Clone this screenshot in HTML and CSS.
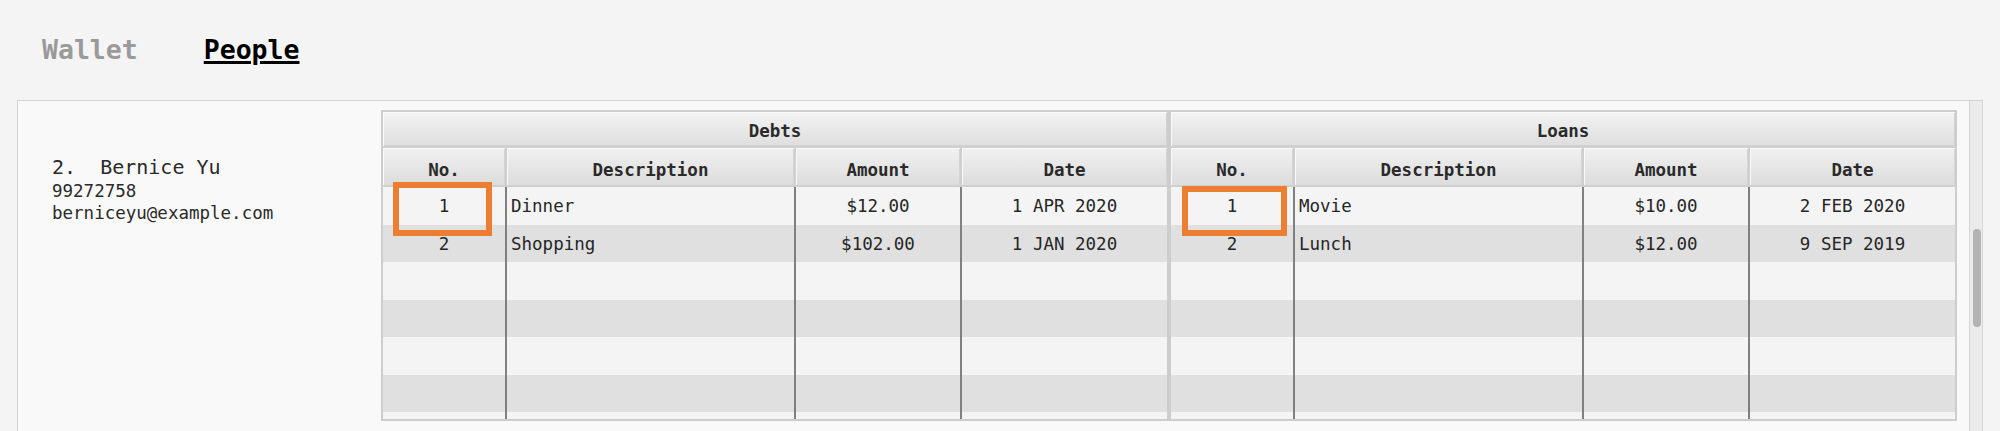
FILE: index.html
```html
<!DOCTYPE html>
<html>
<head>
<meta charset="utf-8">
<link rel="stylesheet" href="styles.css">
</head>
<body>
<nav class="tabs">
  <span class="tab">Wallet</span>
  <span class="tab active">People</span>
</nav>
<section class="panel">
  <div class="content">
    <div class="person">
      <div class="name">2.&nbsp;&nbsp;Bernice Yu</div>
      <div class="detail">99272758</div>
      <div class="detail">berniceyu@example.com</div>
    </div>
    <div class="tables">
      <div class="table">
        <div class="group-head">Debts</div>
        <div class="cols col-head">
          <div class="hcell">No.</div>
          <div class="hcell">Description</div>
          <div class="hcell">Amount</div>
          <div class="hcell">Date</div>
        </div>
        <div class="body">
          <div class="cols row"><div class="cell c">1</div><div class="cell">Dinner</div><div class="cell c">$12.00</div><div class="cell c">1 APR 2020</div></div>
          <div class="cols row alt"><div class="cell c">2</div><div class="cell">Shopping</div><div class="cell c">$102.00</div><div class="cell c">1 JAN 2020</div></div>
          <div class="cols row"><div class="cell"></div><div class="cell"></div><div class="cell"></div><div class="cell"></div></div>
          <div class="cols row alt"><div class="cell"></div><div class="cell"></div><div class="cell"></div><div class="cell"></div></div>
          <div class="cols row"><div class="cell"></div><div class="cell"></div><div class="cell"></div><div class="cell"></div></div>
          <div class="cols row alt"><div class="cell"></div><div class="cell"></div><div class="cell"></div><div class="cell"></div></div>
          <div class="cols row"><div class="cell"></div><div class="cell"></div><div class="cell"></div><div class="cell"></div></div>
        </div>
        <div class="mark mark-debts"></div>
      </div>
      <div class="table">
        <div class="group-head">Loans</div>
        <div class="cols col-head">
          <div class="hcell">No.</div>
          <div class="hcell">Description</div>
          <div class="hcell">Amount</div>
          <div class="hcell">Date</div>
        </div>
        <div class="body">
          <div class="cols row"><div class="cell c">1</div><div class="cell">Movie</div><div class="cell c">$10.00</div><div class="cell c">2 FEB 2020</div></div>
          <div class="cols row alt"><div class="cell c">2</div><div class="cell">Lunch</div><div class="cell c">$12.00</div><div class="cell c">9 SEP 2019</div></div>
          <div class="cols row"><div class="cell"></div><div class="cell"></div><div class="cell"></div><div class="cell"></div></div>
          <div class="cols row alt"><div class="cell"></div><div class="cell"></div><div class="cell"></div><div class="cell"></div></div>
          <div class="cols row"><div class="cell"></div><div class="cell"></div><div class="cell"></div><div class="cell"></div></div>
          <div class="cols row alt"><div class="cell"></div><div class="cell"></div><div class="cell"></div><div class="cell"></div></div>
          <div class="cols row"><div class="cell"></div><div class="cell"></div><div class="cell"></div><div class="cell"></div></div>
        </div>
        <div class="mark mark-loans"></div>
      </div>
    </div>
  </div>
  <div class="scrollbar"><div class="thumb"></div></div>
</section>
</body>
</html>
```
FILE: styles.css
```css
html, body {
  margin: 0;
  padding: 0;
}
body {
  background: #f4f4f4;
  font-family: "DejaVu Sans Mono", "Liberation Mono", monospace;
  color: #2a2a2a;
  height: 431px;
  overflow: hidden;
}
.tabs {
  display: flex;
  gap: 66px;
  height: 100px;
  box-sizing: border-box;
  padding: 34px 0 0 42px;
}
.tab {
  font-size: 26.5px;
  line-height: 31px;
  font-weight: bold;
  color: #9a9a9a;
}
.tab.active {
  color: #000000;
  text-decoration: underline;
  text-decoration-thickness: 3px;
  text-underline-offset: 2px;
}
.panel {
  margin-left: 17px;
  width: 1966px;
  height: 360px;
  box-sizing: border-box;
  border-top: 1px solid #d3d3d3;
  border-left: 1px solid #d3d3d3;
  background: #f9f9f9;
  display: flex;
}
.content {
  flex: 1;
  display: flex;
  padding: 9px 12px 0 0;
}
.person {
  width: 363px;
  flex: none;
  box-sizing: border-box;
  padding: 45px 0 0 34px;
  color: #2a2a2a;
}
.name {
  font-size: 20px;
  line-height: 25px;
}
.detail {
  font-size: 17.5px;
  line-height: 22px;
}
.tables {
  flex: 1;
  display: flex;
  align-items: flex-start;
}
.table {
  flex: 1;
  position: relative;
  border: 2px solid #cdcdcd;
  background: #f4f4f4;
}
.group-head {
  height: 36px;
  box-sizing: border-box;
  padding-top: 3px;
  line-height: 33px;
  text-align: center;
  font-weight: bold;
  font-size: 17.5px;
  color: #2a2a2a;
  background: linear-gradient(#f3f3f3, #dedede);
  box-shadow: inset 1px 1px 0 #fbfbfb, inset -1px -1px 0 #d2d2d2;
  border-bottom: 2px solid #cfcfcf;
}
.cols {
  display: grid;
  grid-template-columns: 124px 289px 166px 1fr;
}
.col-head {
  height: 37px;
  border-bottom: 2px solid #cfcfcf;
  background: #cfcfcf;
}
.hcell {
  box-sizing: border-box;
  padding-top: 8px;
  line-height: 29px;
  text-align: center;
  font-weight: bold;
  font-size: 17.5px;
  color: #2a2a2a;
  background: linear-gradient(#f1f1f1, #dcdcdc);
  box-shadow: inset 1px 1px 0 #fafafa, inset -1px 0 0 #d4d4d4;
  border-right: 2px solid #cfcfcf;
}
.hcell:last-child {
  border-right: none;
}
.body {
  height: 232px;
  overflow: hidden;
}
.row {
  height: 37.5px;
  background: #f4f4f4;
}
.row.alt {
  background: #e0e0e0;
}
.cell {
  box-sizing: border-box;
  padding: 1px 0 0 4px;
  line-height: 36.5px;
  font-size: 17.5px;
  color: #262626;
  border-right: 2px solid #808080;
  white-space: nowrap;
}
.cell:last-child {
  border-right: none;
}
.cell.c {
  text-align: center;
  padding-left: 0;
}
.mark {
  position: absolute;
  box-sizing: border-box;
  border: 6px solid #ed7d31;
}
.mark-debts {
  left: 10px;
  top: 70px;
  width: 99px;
  height: 54px;
}
.mark-loans {
  left: 11px;
  top: 74px;
  width: 105px;
  height: 50px;
}
.scrollbar {
  width: 14px;
  flex: none;
  box-sizing: border-box;
  border-left: 1px solid #d6d6d6;
  border-right: 1px solid #d6d6d6;
  background: #ebebeb;
  padding: 128px 2px 0 3px;
}
.thumb {
  width: 8px;
  height: 98px;
  border-radius: 4px;
  background: #b3b3b3;
}
```
